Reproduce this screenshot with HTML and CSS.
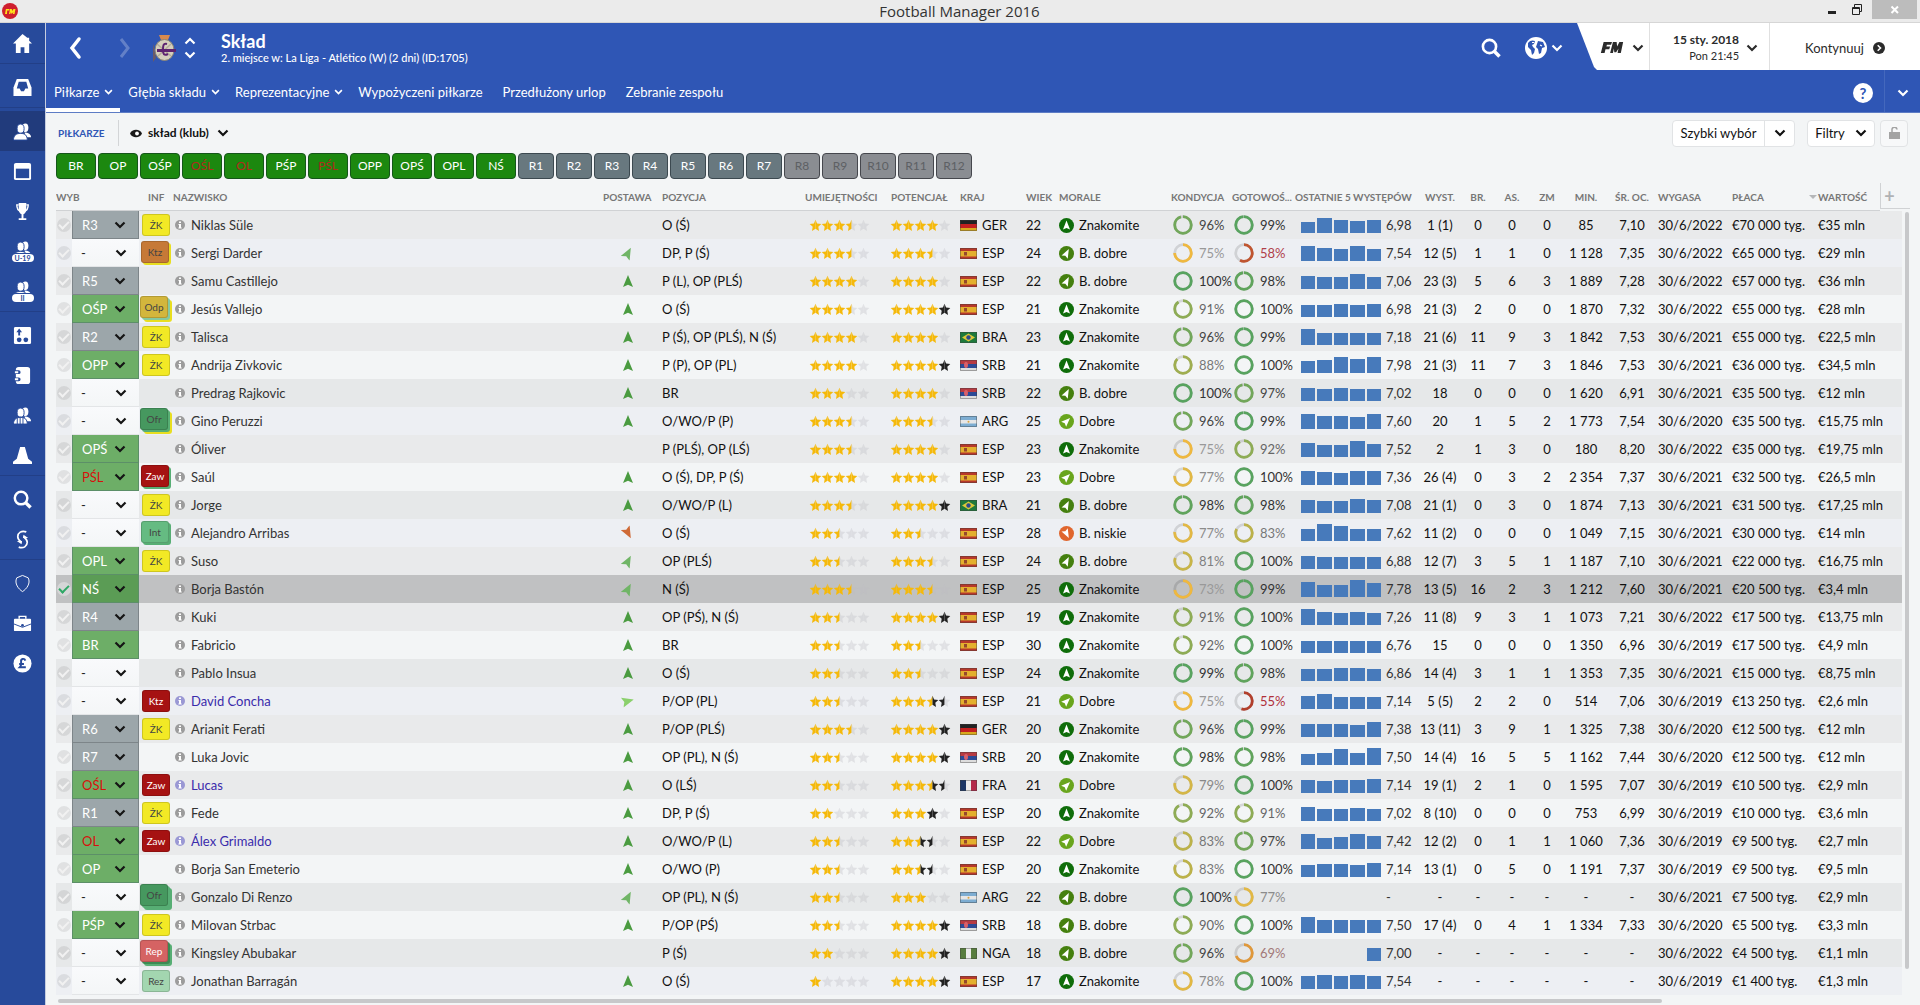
FILE: index.html
```html
<!DOCTYPE html>
<html lang="pl">
<head>
    <meta charset="UTF-8">
    <meta name="viewport" content="width=device-width, initial-scale=1.0">
    <title>Football Manager 2016</title>
    <link rel="stylesheet" href="styles.css">
</head>
<body>

<svg class="defs" aria-hidden="true">
    <symbol id="chev" viewBox="0 0 12 8"><path d="M1.5 1.5 6 6l4.500-4.500" fill="none" stroke="currentColor" stroke-width="2.200"/></symbol>
    <symbol id="arrow" viewBox="0 0 12 12"><path d="M6 0 11 12 6 9.800 1 12z" fill="currentColor"/></symbol>
    <symbol id="search" viewBox="0 0 20 20"><circle cx="8.500" cy="8.500" r="6.600" fill="none" stroke="currentColor" stroke-width="2.600"/><path d="m13 13 5.500 5.500" stroke="currentColor" stroke-width="3.600"/></symbol>
    <symbol id="people" viewBox="0 0 20 20"><ellipse cx="13" cy="6" rx="3.200" ry="4.500" fill="currentColor"/><path d="M12 11c4 0 7 2 7 5h-5z" fill="currentColor"/><g fill="currentColor" stroke="#274a9b"><ellipse cx="8" cy="7" rx="3.700" ry="4.800"/><path d="M.5 19c0-5 3-7 7.500-7s7 2 7 7z"/></g></symbol>
</svg>

<header class="titlebar">
    <svg class="app-icon" viewBox="0 0 16 16"><circle cx="8" cy="8" r="8" fill="#cf1f2e"/><path d="M3.500 6h4l-.3 1.500h-2L5 11H3l.9-5zm4.500 0h1.800l.4 2 1.300-2h2l-1 5h-1.600l.4-2-1.200 1.600H9L8.700 9l-.4 2H7z" fill="#ffe21a"/></svg>
    <h1>Football Manager 2016</h1>
    <div class="window-controls">
        <button aria-label="Minimalizuj"><svg width="20" height="14"><path d="M8 8h8v3H8z" fill="#222"/></svg></button>
        <button aria-label="Przywróć"><svg width="20" height="14"><path d="M6.500 4.500h7v7h-7zM6 5.500h8M8.500 4V1.500h7v7H14" fill="none" stroke="#222"/></svg></button>
        <button class="close" aria-label="Zamknij"><svg width="10" height="10"><path d="m1.500 1.500 6.500 6.500M8 1.500 1.500 8" stroke="#fff" stroke-width="2"/></svg></button>
    </div>
</header>

<div class="app">
    <nav class="sidebar" id="sidebar"></nav>

    <main class="main">
        <div class="header">
            <div class="header-top">
                <button class="history" aria-label="Wstecz"><svg viewBox="0 0 14 22"><path d="M11 2 4 11l7 9" fill="none" stroke="currentColor" stroke-width="3.500" stroke-linecap="round"/></svg></button>
                <button class="history forward" aria-label="Dalej"><svg viewBox="0 0 14 22"><path d="m3 2 7 9-7 9" fill="none" stroke="currentColor" stroke-width="3"/></svg></button>
                <svg class="crest" viewBox="0 0 24 28"><path d="M7 1h11l-2 5H9z" fill="#d98a4e"/><path d="M1 9v19l3-4z" fill="#6b5a66"/><ellipse cx="12.500" cy="16" rx="9.500" ry="10.500" fill="#d5cfbd" stroke="#8b8373"/><path d="M5 10 19 22M19 10 6 22" stroke="#b3ab9a" stroke-width="1.500"/><path d="M5 15h19v3H5z" fill="#5d2370"/><path d="M15 10c-4-1-4 2-4 6s1 6 5 4" fill="none" stroke="#5d2370" stroke-width="2"/></svg>
                <div class="team-switch">
                    <button aria-label="Poprzedni klub"><svg class="up"><use href="#chev"/></svg></button>
                    <button aria-label="Następny klub"><svg><use href="#chev"/></svg></button>
                </div>
                <div class="heading">
                    <h2>Skład</h2>
                    <p>2. miejsce w: La Liga - Atlético (W) (2 dni) (ID:1705)</p>
                </div>
                <button class="icon-button find" aria-label="Szukaj"><svg><use href="#search"/></svg></button>
                <button class="icon-button world" aria-label="Świat"><svg class="globe" viewBox="0 0 22 22"><circle cx="11" cy="11" r="11" fill="#fff"/><path d="M3 6c2-3 5-3 7-2l-1 3-2 1 1 2 2 2-1 4-2 2-1-5-3-3zM13 4l5 1 2 5-3 1-1 5-2 1-1-5-2-2 1-3z" fill="#2f56b5"/><path d="M7 5.500h2M15 8l2 1" stroke="#fff" stroke-width="1.200"/></svg><svg class="chev"><use href="#chev"/></svg></button>
                <div class="corner">
                    <button class="fm" aria-label="Menu FM"><svg class="fm-logo" viewBox="0 0 24 14"><path d="M3 1h9l-1 3H6.500L6 6h4l-1 3H5l-1 4H0zM13 1h4l.5 5L20 1h4l-2.500 12H18l1-5-2.500 4h-2L14 8l-1 5h-3z" fill="#2b2b2b"/></svg><svg class="chev"><use href="#chev"/></svg></button>
                    <button class="date"><span><b>15 sty. 2018</b><small>Pon 21:45</small></span><svg class="chev"><use href="#chev"/></svg></button>
                    <button class="continue">Kontynuuj <svg class="go" viewBox="0 0 12 12"><circle cx="6" cy="6" r="6" fill="#2b2b2b"/><path d="m4.700 3.200 2.800 2.800-2.800 2.800" fill="none" stroke="#fff" stroke-width="1.600"/></svg></button>
                </div>
            </div>
            <nav class="tabs">
                <a href="#" class="active">Piłkarze <svg class="chev"><use href="#chev"/></svg></a>
                <a href="#">Głębia składu <svg class="chev"><use href="#chev"/></svg></a>
                <a href="#">Reprezentacyjne <svg class="chev"><use href="#chev"/></svg></a>
                <a href="#" class="plain">Wypożyczeni piłkarze</a>
                <a href="#" class="plain">Przedłużony urlop</a>
                <a href="#" class="plain">Zebranie zespołu</a>
                <button class="help" aria-label="Pomoc"><span>?</span></button>
                <button class="more" aria-label="Więcej"><svg class="chev"><use href="#chev"/></svg></button>
            </nav>
        </div>

        <div class="toolbar">
            <h3>PIŁKARZE</h3>
            <button class="view"><svg class="eye" viewBox="0 0 12 8"><path d="M0 4c2-5 10-5 12 0-2 5-10 5-12 0z" fill="#1a1a1a"/><circle cx="7" cy="4" r="1.900" fill="#fff"/></svg>skład (klub)<svg class="chev"><use href="#chev"/></svg></button>
            <div class="split">
                <button>Szybki wybór</button>
                <button aria-label="Rozwiń szybki wybór"><svg class="chev"><use href="#chev"/></svg></button>
            </div>
            <button class="filters">Filtry <svg class="chev"><use href="#chev"/></svg></button>
            <button class="lock" aria-label="Zablokuj"><svg viewBox="0 0 11 12"><path d="M0 5h11v7H0z" fill="#a3a3a3"/><path d="M3 5.500V3a2.500 2.500 0 0 1 5-.5" fill="none" stroke="#a3a3a3" stroke-width="1.500"/></svg></button>
        </div>

        <div class="picks" id="picks"></div>

        <div class="table-area">
            <div class="table-wrap">
                <table>
                    <colgroup>
                        <col class="w-check"><col class="w-pick"><col class="w-inf"><col><col class="w-form"><col class="w-pos">
                        <col class="w-abi"><col class="w-pot"><col class="w-nat"><col class="w-age"><col class="w-mor"><col class="w-con">
                        <col class="w-fit"><col class="w-last"><col class="w-app"><col class="w-gol"><col class="w-ast"><col class="w-zm">
                        <col class="w-app"><col class="w-avg"><col class="w-exp"><col class="w-wage"><col class="w-val"><col class="w-add">
                    </colgroup>
                    <thead>
                        <tr>
                            <th colspan="2">WYB</th><th class="inf">INF</th><th>NAZWISKO</th><th>POSTAWA</th><th>POZYCJA</th>
                            <th>UMIEJĘTNOŚCI</th><th>POTENCJAŁ</th><th>KRAJ</th><th>WIEK</th><th>MORALE</th><th>KONDYCJA</th>
                            <th>GOTOWOŚ...</th><th>OSTATNIE 5 WYSTĘPÓW</th><th class="num">WYST.</th><th class="num">BR.</th><th class="num">AS.</th>
                            <th class="num">ZM</th><th class="num">MIN.</th><th class="num">ŚR. OC.</th><th>WYGASA</th><th class="sorted">PŁACA<i></i></th>
                            <th>WARTOŚĆ</th><th class="add"><button aria-label="Dodaj kolumnę">+</button></th>
                        </tr>
                    </thead>
                    <tbody id="players"></tbody>
                </table>
            </div>
            <div class="scroll-y"><div class="scroll-head"></div><div class="thumb"></div></div>
        </div>
        <div class="scroll-x"><div class="thumb"></div></div>
    </main>
</div>

<script src="squad.js"></script>
</body>
</html>
```
FILE: styles.css
```css
* {
    box-sizing: border-box;
}

body {
    margin: 0;
    height: 100vh;
    display: flex;
    flex-direction: column;
    overflow: hidden;
    font-family: Lato, "Open Sans", sans-serif;
    font-size: 13px;
    line-height: 16px;
    color: #111;
    background: #f3f5f6;
}

h1, h2, h3, p {
    margin: 0;
}

button, select, input {
    font: inherit;
    color: inherit;
    margin: 0;
    padding: 0;
    border: 0;
    background: none;
}

button {
    display: flex;
    align-items: center;
    justify-content: center;
    cursor: pointer;
}

a {
    color: inherit;
    text-decoration: none;
}

svg {
    display: block;
    flex: none;
}

.defs {
    position: absolute;
    width: 0;
    height: 0;
}

.chev {
    width: 12px;
    height: 8px;
}

/* window bar */
.titlebar {
    display: grid;
    grid-template-columns: 1fr auto 1fr;
    height: 23px;
    flex: none;
    padding: 0 3px 0 2px;
    background: #ebebeb;
    border-bottom: 1px solid #d6d6d6;
}

.titlebar h1 {
    font: 15px/22px "Open Sans", sans-serif;
    color: #333;
}

.app-icon {
    width: 16px;
    height: 16px;
    margin-top: 3px;
}

.window-controls {
    display: flex;
    justify-content: flex-end;
    gap: 6px;
}

.window-controls button {
    height: 19px;
}

.window-controls .close {
    width: 45px;
    background: #bcbcbc;
}

.app {
    flex: 1;
    display: flex;
    min-height: 0;
}

/* sidebar */
.sidebar {
    width: 46px;
    flex: none;
    background: #274a9b;
    border-right: 1px solid #c5cde0;
    color: #fff;
}

.sidebar a {
    display: flex;
    flex-direction: column;
    align-items: center;
    justify-content: center;
    height: 40px;
}

.sidebar a.current {
    background: #213b7c;
}

.sidebar hr {
    height: 1px;
    margin: 0 0 3px;
    border: 0;
    background: #223f87;
}

.sidebar svg {
    width: 19px;
    height: 19px;
}

.sidebar .tag {
    width: 22px;
    height: 8px;
    margin-top: -5px;
    border-radius: 4px;
    background: #fff;
    box-shadow: 0 0 0 1px #274a9b;
    color: #274a9b;
    font-size: 7px;
    font-weight: bold;
    line-height: 8px;
    text-align: center;
    z-index: 1;
}

.main {
    flex: 1;
    min-width: 0;
    display: flex;
    flex-direction: column;
}

/* header */
.header {
    height: 90px;
    flex: none;
    display: flex;
    flex-direction: column;
    background: #2f56b5;
    border-bottom: 1px solid #5d7cc5;
    color: #fff;
}

.header-top {
    display: flex;
    align-items: center;
    height: 48px;
    padding: 2px 0 0 22px;
}

.history svg {
    width: 14px;
    height: 26px;
}

.history.forward {
    margin-left: 36px;
    opacity: .25;
}

.crest {
    width: 24px;
    height: 30px;
    margin-left: 20px;
}

.team-switch {
    margin-left: 8px;
    display: flex;
    flex-direction: column;
    gap: 6px;
}

.team-switch svg {
    width: 12px;
    height: 8px;
}

.up {
    transform: scaleY(-1);
}

.heading {
    margin-left: 25px;
    padding-top: 2px;
    flex: 1;
}

.heading h2 {
    font-size: 18px;
    line-height: 18px;
}

.heading p {
    font-size: 11px;
    font-weight: 500;
    line-height: 16px;
}

.find svg {
    width: 20px;
    height: 20px;
}

.world {
    margin-left: 24px;
    gap: 4px;
}

.globe {
    width: 22px;
    height: 22px;
}

.corner {
    display: flex;
    align-self: stretch;
    width: 343px;
    margin: -2px 0 0 14px;
    padding-left: 18px;
    background: #fff;
    color: #2b2b2b;
    clip-path: polygon(0 0, 100% 0, 100% 100%, 20px 100%, 17px 44px);
}

.corner button {
    padding-top: 2px;
}

.corner button + button {
    border-left: 1px solid #e0e0e0;
}

.fm {
    width: 54px;
    gap: 8px;
}

.fm-logo {
    width: 24px;
    height: 13px;
}

.corner .date {
    width: 120px;
    gap: 7px;
    padding-left: 12px;
    text-align: right;
}

.date b, .date small {
    display: block;
}

.date b {
    font-size: 12px;
}

.date small {
    font-size: 11px;
}

.continue {
    flex: 1;
    gap: 9px;
}

.go {
    width: 12px;
    height: 12px;
}

.tabs {
    flex: 1;
    display: flex;
    align-items: stretch;
}

.tabs a {
    display: flex;
    align-items: center;
    gap: 5px;
    height: 42px;
    padding: 6px 7px 0 8px;
    border-bottom: 4px solid transparent;
}

.tabs a.active {
    border-bottom-color: #fff;
}

.tabs a.plain {
    padding-right: 12px;
}

.tabs .chev {
    width: 9px;
    height: 6px;
}

.tabs button {
    padding-top: 4px;
}

.tabs .help {
    margin-left: auto;
    padding-right: 11px;
}

.help span {
    width: 20px;
    height: 20px;
    border-radius: 50%;
    background: #fff;
    color: #2f56b5;
    font-weight: bold;
    font-size: 15px;
    line-height: 20px;
}

.more {
    width: 36px;
    border-left: 1px solid #4468bd;
}

.tabs .more .chev {
    width: 12px;
    height: 8px;
}

/* toolbar */
.toolbar {
    display: flex;
    align-items: center;
    flex: none;
    height: 40px;
    padding: 0 12px;
}

.toolbar h3 {
    width: 61px;
    color: #2f56b5;
    font-size: 10px;
    line-height: 26px;
    border-right: 1px solid #d3d5d7;
}

.view {
    margin: 0 auto 0 11px;
    font-size: 12px;
    font-weight: bold;
}

.view .eye {
    width: 12px;
    height: 9px;
    margin-right: 6px;
}

.view .chev {
    margin-left: 8px;
}

.split, .filters, .lock {
    display: flex;
    height: 27px;
    border: 1px solid #e1e3e5;
    border-radius: 4px;
    background: #fff;
}

.split button:first-child {
    width: 92px;
    border-right: 1px solid #e1e3e5;
}

.split button:last-child {
    width: 29px;
}

.filters {
    width: 68px;
    margin-left: 12px;
    gap: 10px;
}

.lock {
    width: 28px;
    margin-left: 5px;
    background: #f7f8f9;
}

.lock svg {
    width: 11px;
    height: 12px;
}

.picks {
    display: flex;
    gap: 2px;
    flex: none;
    margin: 0 10px 4px;
}

.picks button {
    width: 36px;
    height: 26px;
    border: 1px solid #3c4950;
    border-radius: 4px;
    background: #68787f;
    color: #fff;
    font-size: 12px;
}

.picks .first {
    width: 40px;
    background: #1c880f;
    border-color: #15561a;
}

.picks .out {
    color: #b02a1c;
}

.picks button:disabled {
    background: #8a8d92;
    border-color: #45474d;
    color: #5d6064;
}

/* table */
.table-area {
    flex: 1;
    min-height: 0;
    display: flex;
    padding: 0 10px;
}

.table-wrap {
    flex: 1;
    min-width: 0;
    overflow: hidden;
}

table {
    width: 100%;
    table-layout: fixed;
    border-collapse: separate;
    border-spacing: 0;
}

.w-check { width: 16px; }
.w-pick { width: 67px; }
.w-inf { width: 34px; }
.w-form { width: 59px; }
.w-pos { width: 143px; }
.w-abi { width: 86px; }
.w-pot { width: 69px; }
.w-nat { width: 66px; }
.w-age { width: 33px; }
.w-mor { width: 112px; }
.w-con { width: 61px; }
.w-fit { width: 63px; }
.w-last { width: 125px; }
.w-app { width: 40px; }
.w-gol { width: 36px; }
.w-ast { width: 32px; }
.w-zm { width: 38px; }
.w-avg { width: 52px; }
.w-exp { width: 74px; }
.w-wage { width: 86px; }
.w-val { width: 62px; }
.w-add { width: 22px; }

th, td {
    padding: 0;
    height: 28px;
    text-align: left;
    white-space: nowrap;
}

th {
    border-bottom: 1px solid #d0d2d4;
    color: #777;
    font-size: 10px;
}

th.inf {
    padding-left: 9px;
}

th.num, td.num {
    text-align: center;
}

.sorted i {
    float: right;
    margin: 6px 1px 0 0;
    border: 4px solid transparent;
    border-top-color: #b5b7b9;
    border-bottom: 0;
}

th.add {
    border-bottom: 0;
    vertical-align: top;
}

.add button {
    width: 100%;
    height: 26px;
    border: solid #d0d2d4;
    border-width: 0 0 1px 1px;
    color: #b0b2b4;
    font-size: 18px;
    padding-right: 4px;
}

tbody tr { background: #f3f5f6; }
tbody tr.unpicked { background: #edeff3; }
tbody tr:nth-child(odd) { background: #e9eaeb; }
tbody tr:nth-child(odd).unpicked { background: #e6e8e9; }
tbody tr.selected { background: #c0c1c2; }

td > div {
    display: flex;
    align-items: center;
}

.tick {
    appearance: none;
    display: grid;
    place-content: center;
    width: 14px;
    height: 14px;
    margin-left: 1px;
    border-radius: 50%;
    background: rgba(0, 0, 0, .08);
}

.tick::after {
    content: "";
    width: 8px;
    height: 4px;
    margin-top: -2px;
    border: solid #f1f1f1;
    border-width: 0 0 2px 2px;
    transform: rotate(-45deg);
}

.tick:checked {
    background: rgba(255, 255, 255, .35);
}

.tick:checked::after {
    border-color: #2fa866;
}

.pick {
    display: grid;
    align-items: center;
    height: 28px;
    background: linear-gradient(#f9fafc, #f4f6f7);
    border-bottom: 1px solid #e3e5e7;
    color: #222;
}

.pick select, .pick svg {
    grid-area: 1 / 1;
}

.pick select {
    appearance: none;
    height: 27px;
    padding-left: 9px;
    border-radius: 0;
    outline: 0;
}

.pick svg {
    justify-self: end;
    margin-right: 12px;
    color: #151515;
    pointer-events: none;
}

.pick.green {
    background: #6dae67;
    border: solid #5c8f68;
    border-width: 0 1px 1px;
    color: #fff;
}

.pick.grey {
    background: #9ca6aa;
    border: solid #7d8589;
    border-width: 0 1px 1px;
    color: #fff;
}

.pick.red {
    color: #d8100c;
}

.selected .pick {
    background: #5b9c55;
}

.badge {
    width: 28px;
    height: 22px;
    margin-left: 3px;
    border: 1px solid rgba(0, 0, 0, .15);
    border-radius: 3px;
    font-size: 10px;
    line-height: 20px;
    text-align: center;
    color: #444;
}

.badge.two {
    margin: -2px 0 0 2px;
    box-shadow: 2px 2px 0 var(--under);
}

.badge.three {
    margin: -4px 0 0 1px;
    box-shadow: 2px 2px 0 var(--mid), 4px 4px 0 var(--under);
}

.zk { background: #f2e925; }
.ktz { background: #c67937; }
.odp { background: #d3b63c; }
.ofr { background: #46985f; }
.int { background: #65bb82; }
.rez { background: #a3d6b0; }
.rep { background: #d56363; color: #fff; }
.zaw { background: #a61212; color: #fff; }

.name {
    padding-left: 2px;
    gap: 6px;
    color: #333;
}

.name svg {
    width: 10px;
    height: 10px;
    color: #9c9c9c;
}

.name.loan {
    color: #3a2bab;
}

.name.loan svg {
    color: #9a98d4;
}

.form {
    width: 12px;
    height: 12px;
    margin-left: 19px;
}

.stars {
    height: 11px;
    width: 60px;
    overflow: visible;
}

.abi {
    margin-left: 5px;
}

.nat, .morale {
    gap: 5px;
}

.nat svg {
    width: 17px;
    height: 11px;
}

.morale svg {
    width: 15px;
    height: 15px;
}

.ring {
    padding-left: 2px;
    gap: 6px;
}

.ring svg {
    width: 20px;
    height: 20px;
}

.last {
    padding-left: 6px;
    color: #333;
}

.bars {
    display: flex;
    align-items: flex-end;
    gap: 2px;
    width: 80px;
    height: 18px;
    margin: 0 5px 2px 0;
}

.bars span {
    flex: 1;
    background: #477abb;
}

.scroll-y {
    width: 8px;
    display: flex;
    flex-direction: column;
}

.scroll-head {
    height: 26px;
    flex: none;
    margin-bottom: 3px;
    border-bottom: 1px solid #d0d2d4;
}

.scroll-y .thumb {
    width: 4px;
    height: 93%;
    margin-left: 3px;
    border-radius: 2px;
    background: #c7c8ca;
}

.scroll-x {
    flex: none;
    height: 8px;
    padding: 2px 18px 2px 12px;
}

.scroll-x .thumb {
    width: 87%;
    height: 4px;
    border-radius: 2px;
    background: #c7c8ca;
}
```
FILE: squad.js
```js
// typ wyboru | info | nazwisko | postawa | pozycja | umiejętności/potencjał (w połówkach gwiazdek) | kraj | wiek | morale | kondycja | gotowość | ostatnie 5 | ocena | reszta
var squad = [
    "R3|zk|Niklas Süle||O (Ś)|7,8,8|GER|22|Z|96|99|11,15,13,12,13|6,98|1 (1)|0|0|0|85|7,10|30/6/2022|€70 000 tyg.|€35 mln",
    "-|ktz,zk|Sergi Darder|B|DP, P (Ś)|7,7,7|ESP|24|B|75|58|15,13,12,15,12|7,54|12 (5)|1|1|0|1 128|7,35|30/6/2022|€65 000 tyg.|€29 mln",
    "R5||Samu Castillejo|Z|P (L), OP (PLŚ)|8,8,8|ESP|22|B|100|98|13,12,12,15,12|7,06|23 (3)|5|6|3|1 889|7,28|30/6/2022|€57 000 tyg.|€36 mln",
    "OŚP|odp,rez,zk|Jesús Vallejo|Z|O (Ś)|7,8,10|ESP|21|Z|91|100|12,12,13,12,13|6,98|21 (3)|2|0|0|1 870|7,32|30/6/2022|€55 000 tyg.|€28 mln",
    "R2|zk|Talisca|Z|P (Ś), OP (PLŚ), N (Ś)|8,8,8|BRA|23|Z|96|99|16,12,12,12,12|7,18|21 (6)|11|9|3|1 842|7,53|30/6/2021|€55 000 tyg.|€22,5 mln",
    "OPP|zk|Andrija Zivkovic|Z|P (P), OP (PL)|8,8,10|SRB|21|Z|88|100|12,13,16,14,16|7,98|21 (3)|11|7|3|1 846|7,53|30/6/2021|€36 000 tyg.|€34,5 mln",
    "-||Predrag Rajkovic|Z|BR|6,8,8|SRB|22|B|100|97|13,12,13,12,12|7,02|18|0|0|0|1 620|6,91|30/6/2021|€35 500 tyg.|€12 mln",
    "-|ofr,int,zk|Gino Peruzzi|Z|O/WO/P (P)|7,7,7|ARG|25|D|96|99|15,13,13,12,15|7,60|20|1|5|2|1 773|7,54|30/6/2020|€35 500 tyg.|€15,75 mln",
    "OPŚ||Óliver||P (PLŚ), OP (LŚ)|7,8,8|ESP|23|Z|75|92|14,12,12,16,13|7,52|2|1|3|0|180|8,20|30/6/2022|€35 000 tyg.|€19,75 mln",
    "PŚL|zaw,int|Saúl|Z|O (Ś), DP, P (Ś)|8,8,8|ESP|23|D|77|100|14,13,12,14,14|7,36|26 (4)|0|3|2|2 354|7,37|30/6/2021|€32 500 tyg.|€26,5 mln",
    "-|zk|Jorge|Z|O/WO/P (L)|7,8,10|BRA|21|B|98|98|13,12,12,14,13|7,08|21 (1)|0|3|0|1 874|7,13|30/6/2021|€31 500 tyg.|€17,25 mln",
    "-|int,int|Alejandro Arribas|N|O (Ś)|5,5,5|ESP|28|N|77|83|12,17,15,12,12|7,62|11 (2)|0|0|0|1 049|7,15|30/6/2021|€30 000 tyg.|€14 mln",
    "OPL|zk|Suso|B|OP (PLŚ)|5,7,7|ESP|24|B|81|100|13,12,12,12,12|6,88|12 (7)|3|5|1|1 187|7,10|30/6/2021|€22 000 tyg.|€16,75 mln",
    "NŚ||Borja Bastón|B|N (Ś)|7,7,7|ESP|25|Z|73|99|15,12,12,17,14|7,78|13 (5)|16|2|3|1 212|7,60|30/6/2021|€20 500 tyg.|€3,4 mln",
    "R4||Kuki|Z|OP (PŚ), N (Ś)|5,8,10|ESP|19|Z|91|100|16,13,12,13,12|7,26|11 (8)|9|3|1|1 073|7,21|30/6/2022|€17 500 tyg.|€13,75 mln",
    "BR||Fabricio|Z|BR|5,5,5|ESP|30|Z|92|100|12,12,12,12,12|6,76|15|0|0|0|1 350|6,96|30/6/2019|€17 500 tyg.|€4,9 mln",
    "-||Pablo Insua|Z|O (Ś)|5,5,5|ESP|24|Z|99|98|12,12,13,13,12|6,86|14 (4)|3|1|1|1 353|7,35|30/6/2021|€15 000 tyg.|€8,75 mln",
    "-|zaw:Ktz|*David Concha|D|P/OP (PL)|5,7,9|ESP|21|D|75|55|13,15,12,12,12|7,14|5 (5)|2|2|0|514|7,06|30/6/2019|€13 250 tyg.|€2,6 mln",
    "R6|zk|Arianit Ferati|Z|P/OP (PLŚ)|7,8,10|GER|20|Z|96|99|13,13,13,12,15|7,38|13 (11)|3|9|1|1 325|7,38|30/6/2020|€12 500 tyg.|€12 mln",
    "R7||Luka Jovic|Z|OP (PL), N (Ś)|5,8,10|SRB|20|Z|98|98|11,12,16,12,17|7,50|14 (4)|16|5|5|1 162|7,44|30/6/2020|€12 500 tyg.|€12 mln",
    "OŚL|zaw|*Lucas|Z|O (LŚ)|5,7,9|FRA|21|D|79|100|13,12,13,13,14|7,14|19 (1)|2|1|0|1 595|7,07|30/6/2019|€10 500 tyg.|€2,9 mln",
    "R1|zk|Fede|Z|DP, P (Ś)|4,6,8|ESP|20|Z|92|91|14,12,12,13,12|7,02|8 (10)|0|0|0|753|6,99|30/6/2019|€10 000 tyg.|€3,6 mln",
    "OL|zaw|*Álex Grimaldo|Z|O/WO/P (L)|5,5,7|ESP|22|D|83|97|15,11,12,15,13|7,42|12 (2)|0|1|1|1 060|7,36|30/6/2019|€9 500 tyg.|€2,7 mln",
    "OP||Borja San Emeterio|Z|O/WO (P)|5,5,7|ESP|20|Z|83|100|12,13,13,12,14|7,14|13 (1)|0|5|0|1 191|7,37|30/6/2019|€9 500 tyg.|€9,5 mln",
    "-|ofr,int,int|Gonzalo Di Renzo|B|OP (PL), N (Ś)|5,6,6|ARG|22|B|100|77|0,0,0,0,0|-|-|-|-|-|-|-|30/6/2021|€7 500 tyg.|€2,9 mln",
    "PŚP|zk|Milovan Strbac|Z|P/OP (PŚ)|5,8,10|SRB|18|B|90|100|16,13,13,13,13|7,50|17 (4)|0|4|1|1 334|7,33|30/6/2020|€5 500 tyg.|€3,3 mln",
    "-|rep,ofr,int|Kingsley Abubakar||P (Ś)|4,8,10|NGA|18|B|96|69|0,0,0,0,13|7,00|-|-|-|-|-|-|30/6/2022|€4 500 tyg.|€1,1 mln",
    "-|rez|Jonathan Barragán|Z|O (Ś)|2,8,10|ESP|17|Z|78|100|13,14,13,14,13|7,54|-|-|-|-|-|-|30/6/2019|€1 400 tyg.|€1,3 mln"
];

var badgeNames = {zk: "ŻK", ktz: "Ktz", odp: "Odp", ofr: "Ofr", int: "Int", rez: "Rez", rep: "Rep", zaw: "Zaw"};
var badgeColors = {zk: "#e8de20", ofr: "#3c8a53", int: "#57ae74", rez: "#84c9a0"};

var moraleTypes = {
    Z: ["Znakomite", "#0f6d0a", 0, "#4a9b40"],
    B: ["B. dobre", "#45800f", 28, "#70b566"],
    D: ["Dobre", "#69a51d", 45, "#8bd06c"],
    N: ["B. niskie", "#e0662e", 152, "#cf6a36"]
};

var flags = {
    GER: '<path d="M0 0h17v4H0z" fill="#222"/><path d="M0 4h17v4H0z" fill="#c3201f"/><path d="M0 8h17v3H0z" fill="#d9a91d"/>',
    ESP: '<path d="M0 0h17v11H0z" fill="#b8382a"/><path d="M0 3h17v5.500H0z" fill="#e4b02e"/><path d="M4 4h3v3.500H4z" fill="#96482b"/>',
    BRA: '<path d="M0 0h17v11H0z" fill="#1e7a3c"/><path d="m8.500 1.500 6.500 4-6.500 4L2 5.500z" fill="#dcc83a"/><circle cx="8.500" cy="5.500" r="2.200" fill="#2c4a8c"/>',
    SRB: '<path d="M0 0h17v4H0z" fill="#b83a42"/><path d="M0 4h17v4H0z" fill="#2c4a96"/><path d="M0 8h17v3H0z" fill="#ddd"/><ellipse cx="6" cy="5" rx="2" ry="3" fill="#d8606a"/>',
    ARG: '<path d="M0 0h17v11H0z" fill="#7dadd2"/><path d="M0 4h17v3.500H0z" fill="#e6e6e6"/><circle cx="8.500" cy="5.700" r="1" fill="#d9a441"/>',
    FRA: '<path d="M0 0h6v11H0z" fill="#1c3766"/><path d="M6 0h5v11H6z" fill="#ececec"/><path d="M11 0h6v11h-6z" fill="#b4284a"/>',
    NGA: '<path d="M0 0h17v11H0z" fill="#587d3e"/><path d="M6 0h5v11H6z" fill="#ececec"/>'
};

// progi kolorów: procent, pierścień, tekst
var levels = [
    [99, "#58a35f", "#333"], [98, "#60a45c", "#333"], [96, "#72a75a", "#444"], [90, "#8eac55", "#666"],
    [88, "#9fae50", "#777"], [83, "#bcb24a", "#777"], [81, "#c8b548", "#808080"], [79, "#d4b647", "#888"],
    [77, "#e2b844", "#8c8c8c"], [73, "#efb83f", "#999"], [69, "#e0983a", "#a27878"], [58, "#c05530", "#b0404a"], [0, "#b23f2c", "#b0303a"]
];

function chev() {
    return '<svg class="chev"><use href="#chev"/></svg>';
}

function pickCell(pos) {
    var cls = pos === "-" ? "" : /^R\d/.test(pos) ? "grey" : "green";
    if (["OŚL", "OL", "PŚL"].indexOf(pos) >= 0) cls += " red";
    return '<label class="pick ' + cls + '"><select aria-label="Wybór"><option>' + pos + '</option></select>' + chev() + '</label>';
}

function badgeCell(info) {
    if (!info) return "";
    var parts = info.split(",");
    var kind = parts[0].split(":");
    var size = ["", "two", "three"][parts.length - 1];
    var style = "";
    if (parts.length > 1) {
        style = ' style="--under:' + badgeColors[parts[parts.length - 1]] + ';--mid:' + badgeColors[parts[1]] + '"';
    }
    return '<div><span class="badge ' + kind[0] + ' ' + size + '"' + style + '>' + (kind[1] || badgeNames[kind[0]]) + '</span></div>';
}

function stars(gold, black, cls) {
    var out = '<svg class="stars ' + cls + '" viewBox="0 0 60 11">';
    for (var i = 0; i < 10; i++) {
        var color = i < gold ? "#f5b90b" : i < black ? "#222" : "rgba(190,190,195,.35)";
        var half = i % 2 === 0
            ? "M5.500-.3v9.100L2 11l.7-4.200L-.3 3.900l4.200-.5z"
            : "M5.500-.3v9.100L9 11l-.7-4.200 3-2.900-4.200-.5z";
        out += '<path transform="translate(' + Math.floor(i / 2) * 12 + ')" d="' + half + '" fill="' + color + '"/>';
    }
    return out + '</svg>';
}

function ring(value) {
    var level = levels.find(function (l) { return value >= l[0]; });
    return '<div class="ring"><svg viewBox="0 0 20 20"><g fill="none" stroke-width="2.800">' +
        '<circle cx="10" cy="10" r="8.300" stroke="rgba(0,0,0,.12)"/>' +
        '<circle cx="10" cy="10" r="8.300" pathLength="100" stroke-dasharray="' + value + ' 100" transform="rotate(-90 10 10)" stroke="' + level[1] + '"/>' +
        '</g></svg><span style="color:' + level[2] + '">' + value + '%</span></div>';
}

function bars(list) {
    return list.split(",").map(function (h) {
        return '<span style="height:' + h + 'px"></span>';
    }).join("");
}

document.getElementById("players").innerHTML = squad.map(function (line) {
    var p = line.split("|");
    var selected = p[2] === "Borja Bastón";
    var loan = p[2].charAt(0) === "*";
    var rate = p[5].split(",");
    var m = moraleTypes[p[8]];
    var form = moraleTypes[p[3]];
    var turn = p[3] === "D" ? 75 : form ? form[2] : 0;
    var cells = [
        '<input type="checkbox" class="tick" aria-label="Zaznacz"' + (selected ? " checked" : "") + '>',
        pickCell(p[0]),
        badgeCell(p[1]),
        '<div class="name' + (loan ? " loan" : "") + '"><svg viewBox="0 0 10 10"><circle cx="5" cy="5" r="5" fill="currentColor"/><path d="M4 1.500h2v1.400H4zM3.500 4H6v3.500h.7v1H3.400v-1H4V5h-.5z" fill="#fff"/></svg><a href="#">' + p[2].replace("*", "") + '</a></div>',
        form ? '<svg class="form" style="color:' + form[3] + ';transform:rotate(' + turn + 'deg)"><use href="#arrow"/></svg>' : "",
        p[4],
        stars(rate[0], 0, "abi"),
        stars(rate[1], rate[2], ""),
        '<div class="nat"><svg viewBox="0 0 17 11">' + flags[p[6]] + '<path d="M.5.5h16v10H.5z" fill="none" stroke="rgba(60,60,60,.4)"/></svg>' + p[6] + '</div>',
        p[7],
        '<div class="morale"><svg viewBox="0 0 15 15"><circle cx="7.500" cy="7.500" r="7.500" fill="' + m[1] + '"/><path d="M7.500 2.500 11 11.500 7.500 10 4 11.500z" fill="#fff" transform="rotate(' + m[2] + ' 7.500 7.500)"/></svg>' + m[0] + '</div>',
        ring(+p[9]),
        ring(+p[10]),
        '<div class="last"><div class="bars">' + bars(p[11]) + '</div>' + p[12] + '</div>'
    ];
    var html = cells.map(function (c) { return "<td>" + c + "</td>"; }).join("");
    for (var i = 13; i < 19; i++) {
        html += '<td class="num">' + p[i] + '</td>';
    }
    html += "<td>" + p[19] + "</td><td>" + p[20] + '</td><td colspan="2">' + p[21] + "</td>";
    return '<tr class="' + (p[0] === "-" ? "unpicked" : "") + (selected ? " selected" : "") + '">' + html + "</tr>";
}).join("");

// pasek wyboru pozycji
var positions = "BR OP OŚP OŚL OL PŚP PŚL OPP OPŚ OPL NŚ R1 R2 R3 R4 R5 R6 R7 R8 R9 R10 R11 R12".split(" ");
document.getElementById("picks").innerHTML = positions.map(function (pos, i) {
    var cls = i < 11 ? "first" : "";
    if (["OŚL", "OL", "PŚL"].indexOf(pos) >= 0) cls += " out";
    return '<button class="' + cls + '"' + (i > 17 ? " disabled" : "") + '>' + pos + '</button>';
}).join("");

// menu boczne
var F = 'fill="currentColor"';
var B = 'fill="#274a9b"';
var menu = [
    ["Start", '<path d="M10 0 0 10h3v10h5v-6h4v6h5V10h3L17 7V4h-2z" ' + F + '/>'],
    "-",
    ["Skrzynka", '<path d="M4 1h12l3.500 9v9H.5v-9z" ' + F + '/><path d="M6 4h8l2 7h-3l-1.500 3h-3L7 11H4z" ' + B + '/>'],
    "-",
    ["Skład", '<use href="#people"/>', "current"],
    ["Kalendarz", '<rect x="1" y="1" width="18" height="18" rx="2" ' + F + '/><path d="M3 7h14v10H3z" ' + B + '/>'],
    ["Rozgrywki", '<path d="M6 1h8v6c0 3-1 5-3 6v4h3v2H6v-2h3v-4C7 12 6 10 6 7z" ' + F + '/><path d="M6 3H4c0 4 1 6 4 7M14 3h2c0 4-1 6-4 7" fill="none" stroke="currentColor" stroke-width="1.500"/>'],
    ["U-19", '<use href="#people"/>', "", "U-19"],
    ["Rezerwy", '<use href="#people"/>', "", "II"],
    "-",
    ["Taktyka", '<rect x="1" y="1" width="18" height="18" rx="1.500" ' + F + '/><path d="m6.500 2.500 3 4h-2V10h-2V6.500h-2z" ' + B + '/><circle cx="6.500" cy="14.500" r="2.500" ' + B + '/><circle cx="13.500" cy="14.500" r="2.500" ' + B + '/>'],
    ["Raporty", '<rect x="3" y="1" width="15" height="18" rx="3" ' + F + '/><path d="M1 6.500h5M1 14h5" stroke="#274a9b" stroke-width="4" stroke-linecap="round"/><path d="M2 6.500h3.500M2 14h3.500" stroke="currentColor" stroke-width="2"/>'],
    ["Sztab", '<use href="#people"/><path d="M4.500 12.500V19M7.500 11v8M10.500 12.500V19" stroke="#274a9b"/>'],
    ["Trening", '<path d="M7.500 1h5l3.500 12.500 4 3V19H0v-2.500l4-3z" ' + F + '/>'],
    "-",
    ["Skauting", '<use href="#search"/>'],
    ["Transfery", '<path d="M14 2C9 0 5 3 5 7c0 3 1.500 4 4 6M6 18c5 2 9-1 9-5 0-3-1.500-4-4-6" fill="none" stroke="currentColor" stroke-width="1.800"/><path d="M10.500 8.500 11 5l5 3.500zM9.500 11.500 9 15l-5-3.500z" ' + F + '/>'],
    "-",
    ["Klub", '<path d="M10 1.500 16 4c3 6-2 12-6 14.500C6 16 1 10 4 4z" fill="none" stroke="currentColor"/>'],
    ["Zarząd", '<rect x="1" y="5" width="18" height="13" rx="1" ' + F + '/><path d="M6.500 5V2.500h7V5" fill="none" stroke="currentColor" stroke-width="1.500"/><path d="M1 10.500 10 14l9-3.500" fill="none" stroke="#274a9b"/><circle cx="10" cy="12" r="1.500" ' + B + '/>'],
    ["Finanse", '<circle cx="10" cy="10" r="9.500" ' + F + '/><path d="M13 7c-1-3-5-2-4.500 1 .5 3 .5 4-1.500 6h6.500M6.500 10.500h5" fill="none" stroke="#274a9b" stroke-width="2"/>']
];
document.getElementById("sidebar").innerHTML = menu.map(function (item) {
    if (item === "-") return "<hr>";
    return '<a href="#" class="' + (item[2] || "") + '" aria-label="' + item[0] + '"><svg viewBox="0 0 20 20">' + item[1] + '</svg>' +
        (item[3] ? '<span class="tag">' + item[3] + '</span>' : "") + '</a>';
}).join("");
```
